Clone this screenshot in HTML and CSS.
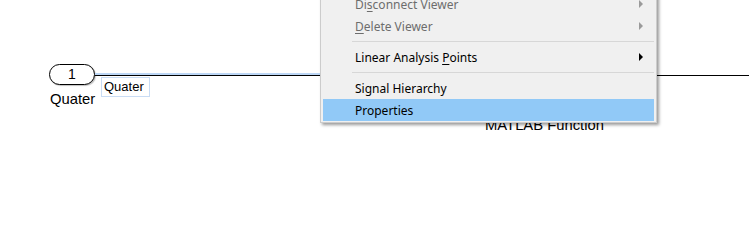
FILE: index.html
```html
<!DOCTYPE html>
<html lang="en">

<head>
    <meta charset="UTF-8">
    <title>Simulink - Quater</title>
    <link rel="stylesheet" href="styles.css">
</head>

<body>

    <div class="canvas">
        <!-- inport block -->
        <div class="inport">1</div>
        <div class="block-name inport-name">Quater</div>

        <!-- selected signal line -->
        <div class="signal signal-left"></div>
        <div class="signal signal-right"></div>
        <div class="signal-label">Quater</div>

        <div class="block-name fcn-name">MATLAB Function</div>

        <!-- context menu -->
        <ul class="menu">
            <li class="item disabled"><span>Di<u>s</u>connect Viewer</span><i class="arrow"></i></li>
            <li class="item disabled"><span><u>D</u>elete Viewer</span><i class="arrow"></i></li>
            <li class="sep"></li>
            <li class="item"><span>Linear Analysis <u>P</u>oints</span><i class="arrow"></i></li>
            <li class="sep"></li>
            <li class="item"><span>Signal Hierarchy</span></li>
            <li class="item active"><span>Properties</span></li>
        </ul>
    </div>

</body>

</html>
```

FILE: styles.css
```css
body {
    margin: 0;
    padding: 0;
    background-color: #fff;
    font-family: "Liberation Sans", Arial, sans-serif;
    color: #000;
}

.canvas {
    position: relative;
    width: 749px;
    height: 247px;
    overflow: hidden;
}

/* diagram blocks */
.inport {
    position: absolute;
    left: 49px;
    top: 64px;
    width: 44px;
    height: 19px;
    border: 1.5px solid #000;
    border-radius: 11px;
    box-shadow: 1px 1px 1px rgba(0, 0, 0, 0.25);
    font-size: 14px;
    line-height: 19px;
    text-align: center;
    background-color: #fff;
}

.block-name {
    position: absolute;
    font-size: 14.8px;
    line-height: 17px;
    white-space: nowrap;
}

.inport-name {
    left: 50px;
    top: 91px;
}

.fcn-name {
    left: 485px;
    top: 117px;
}

.signal {
    position: absolute;
    top: 75px;
    height: 1px;
    background-color: #000;
}

.signal-left {
    left: 95px;
    width: 230px;
    border-top: 2px solid #bcd6f5;
    top: 73px;
}

.signal-right {
    left: 650px;
    width: 100px;
}

.signal-label {
    position: absolute;
    left: 101px;
    top: 77px;
    width: 45px;
    height: 18px;
    border: 1px solid #c9dcf4;
    font-size: 13px;
    line-height: 18px;
    padding-left: 2px;
    box-sizing: content-box;
    white-space: nowrap;
    background-color: #fff;
}

/* context menu */
.menu {
    position: absolute;
    left: 320px;
    top: -10px;
    width: 331px;
    margin: 0;
    padding: 2px 2px 1px 2px;
    list-style: none;
    background-color: #f0f0f0;
    border: 1px solid #cccccc;
    box-shadow: 2px 2px 3px rgba(0, 0, 0, 0.4);
    font-family: "Noto Sans", "Open Sans", sans-serif;
    font-size: 12px;
    color: #000;
}

.item {
    display: flex;
    align-items: center;
    justify-content: space-between;
    height: 22px;
    padding: 0 11px 0 32px;
}

.item span {
    white-space: nowrap;
}

.item u {
    text-decoration-thickness: 1px;
    text-underline-offset: 2px;
}

.item.disabled {
    color: #6d6d6d;
}

.item.active {
    background-color: #91c9f7;
}

.arrow {
    width: 0;
    height: 0;
    border-top: 4px solid transparent;
    border-bottom: 4px solid transparent;
    border-left: 4px solid #000;
}

.disabled .arrow {
    border-left-color: #9a9a9a;
}

.sep {
    height: 1px;
    margin: 4px 0 4px 29px;
    background-color: #d7d7d7;
}
```
